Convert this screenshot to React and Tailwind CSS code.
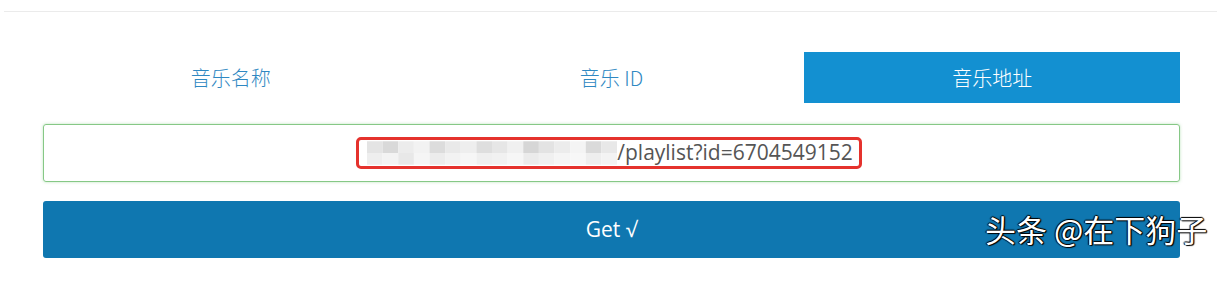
import React from "react";

const tabs = ["音乐名称", "音乐 ID", "音乐地址"];

// pixelated blur over the hidden domain part
const cells = [
  ["#e4e4e4", "#d9d9d9", "#ececec", "#f2f2f2", "#dcdcdc", "#e9e9e9", "#eeeeee", "#dedede", "#e6e6e6", "#f0f0f0", "#d6d6d6", "#e3e3e3", "#ececec", "#f4f4f4", "#dadada", "#e8e8e8"],
  ["#eeeeee", "#f3f3f3", "#e8e8e8", "#f5f5f5", "#ececec", "#f2f2f2", "#f6f6f6", "#efefef", "#f1f1f1", "#f6f6f6", "#ebebeb", "#f0f0f0", "#f5f5f5", "#f7f7f7", "#eeeeee", "#f3f3f3"],
];

const Blur = () => (
  <svg width="250" height="24" viewBox="0 0 256 24" className="shrink-0">
    {cells.map((row, r) =>
      row.map((c, i) => (
        <rect key={r + "-" + i} x={i * 16} y={r * 12} width="16" height="12" fill={c} />
      ))
    )}
  </svg>
);

const App = () => {
  return (
    <div className="relative h-[285px] w-full overflow-hidden bg-white font-['Noto_Sans_CJK_SC','Noto_Sans',sans-serif]">
      <div className="ml-[4px] mt-[11px] h-px bg-[#ebebeb]" />

      <div className="pl-[43px] pr-[37px]">
        <div className="mt-[40px] grid h-[51px] grid-cols-3 gap-[5px]">
          {tabs.map((t, i) => (
            <div
              key={t}
              className={
                i === 2
                  ? "flex items-center justify-center bg-[#1390d1] text-[20px] font-light text-white"
                  : "flex items-center justify-center text-[20px] font-light text-[#2f88c2]"
              }
            >
              {t}
            </div>
          ))}
        </div>

        <div className="mt-[21px] flex h-[58px] items-center justify-center rounded-[3px] border border-[#86c886] shadow-[0_0_3px_rgba(120,200,120,0.5)]">
          <div className="mr-[5px] flex h-[32px] w-[506px] items-center justify-center rounded-[5px] border-[3px] border-[#e5322d] pl-[2px]">
            <Blur />
            <span className="font-['Open_Sans',sans-serif] text-[21px] text-[#555555]">
              /playlist?id=6704549152
            </span>
          </div>
        </div>

        <div className="mt-[19px] flex h-[57px] items-center justify-center rounded-[3px] bg-[#0f77b0] font-['Open_Sans',sans-serif] text-[21px] text-white">
          Get √
        </div>
      </div>

      <div className="absolute left-[985px] top-[213px] text-[31px] leading-none text-white [text-shadow:1px_1px_1px_#000,-1px_0_1px_#000,0_-1px_1px_#000,1px_0_1px_#000]">
        头条 @在下狗子
      </div>
    </div>
  );
};

export default App;
